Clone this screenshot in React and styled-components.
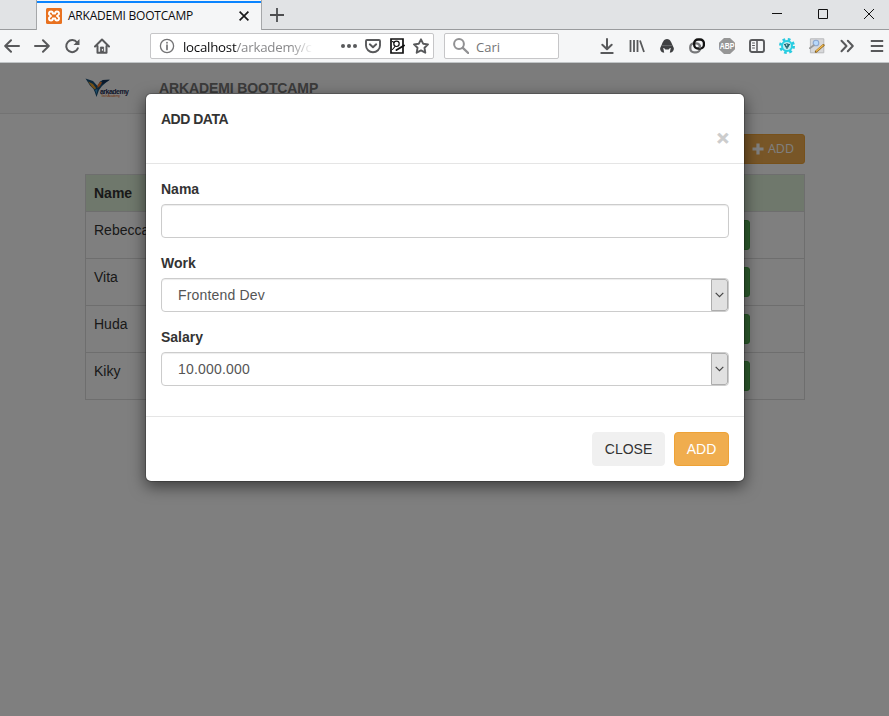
import React from 'react';
import styled, { createGlobalStyle } from 'styled-components';

const GlobalStyle = createGlobalStyle`
  *, *::before, *::after { box-sizing: border-box; }
  html, body { margin: 0; padding: 0; overflow: hidden; }
  body { font: 14px/20px "Liberation Sans", Arial, sans-serif; color: #333; background: #fff; }
  svg { display: block; flex: none; }
`;

const Window = styled.div`
  width: 889px;
  height: 716px;
  display: flex;
  flex-direction: column;
  overflow: hidden;
`;

/* Browser chrome */
const TabStrip = styled.div`
  display: flex;
  flex: none;
  height: 30px;
  padding-left: 36px;
  background: linear-gradient(#999b9d, #999b9d) bottom / 100% 1px no-repeat #e1e3e5;
  overflow: hidden;
`;
const Tab = styled.div`
  display: flex;
  align-items: center;
  width: 226px;
  height: 30px;
  padding: 2px 9px 0;
  background: linear-gradient(#0a84ff, #0a84ff) 0 1px / 100% 2px no-repeat #f5f6f7;
  border-left: 1px solid #a5a7a9;
  border-right: 1px solid #a5a7a9;
`;
const TabTitle = styled.span`
  flex: 1;
  margin-left: 6px;
  font: 12px/16px "Open Sans", "Noto Sans", sans-serif;
  letter-spacing: -0.22px;
  color: #0c0c0d;
  white-space: nowrap;
`;
const NewTab = styled.div`
  display: flex;
  align-items: center;
  padding-left: 8px;
`;
const WindowControls = styled.div`
  display: flex;
  margin: 0 -3px 0 auto;
`;
const ControlCell = styled.div`
  display: grid;
  place-items: center;
  width: 46px;
  height: 28px;
`;
const Toolbar = styled.div`
  display: flex;
  align-items: center;
  flex: none;
  height: 33px;
  background: #f5f6f7;
  border-bottom: 1px solid #c1c5c7;
  overflow: hidden;
`;
const IconRow = styled.div`
  display: flex;
  flex: none;
  margin-left: ${(p) => p.$offset}px;
`;
const IconCell = styled.span`
  display: grid;
  place-items: center;
  flex: none;
  width: ${(p) => p.$width || 30}px;
  height: 26px;
`;
const Field = styled.div`
  display: flex;
  align-items: center;
  flex: none;
  width: ${(p) => p.$width}px;
  height: 26px;
  margin-left: ${(p) => p.$gap}px;
  padding-left: 8px;
  background: #fff;
  border: 1px solid #c6c6c8;
  border-radius: 2px;
  font: 13.3px/18px "Open Sans", "Noto Sans", sans-serif;
  color: #747476;
`;
const Address = styled.span`
  width: 130px;
  margin: 2px 0 0 8px;
  white-space: nowrap;
  letter-spacing: -0.25px;
  color: #8a8a8c;
  mask-image: linear-gradient(90deg, #000 108px, transparent 130px);
  b { font-weight: 400; color: #0c0c0d; }
`;
const UrlActions = styled.div`
  display: flex;
  margin: 0 0 0 auto;
`;
const SearchHint = styled.span`
  margin: 2px 0 0 7px;
  font-size: 13px;
`;

/* Page */
const Page = styled.main`
  position: relative;
  flex: 1;
  background: #fff;
`;
const Navbar = styled.nav`
  display: flex;
  height: 51px;
  padding-left: 85px;
  background: #f8f8f8;
  border-bottom: 1px solid #e7e7e7;
`;
const Brand = styled.span`
  margin: 15px 0 0 29px;
  font-weight: 700;
  letter-spacing: -0.11px;
  color: #777;
`;
const LogoBox = styled.div`
  width: 45px;
  padding-top: 14px;
`;
const Container = styled.div`
  width: 720px;
  margin-left: 85px;
  padding-top: 20px;
`;
const Actions = styled.div`
  display: flex;
  justify-content: flex-end;
  margin-bottom: 10px;
`;
const SmallButton = styled.button`
  display: flex;
  align-items: center;
  gap: 4px;
  height: 30px;
  padding: 0 10px;
  font: 400 12.5px/18px "Open Sans", "Noto Sans", sans-serif;
  color: #fff;
  background: #f0ad4e;
  border: 1px solid #eea236;
  border-radius: 3px;
`;
const Table = styled.div`
  border: 1px solid #ddd;
  border-top: 0;
`;
const Row = styled.div`
  display: grid;
  grid-template-columns: 200px 200px 180px 1fr;
  height: ${(p) => (p.$head ? 37 : 47)}px;
  border-top: 1px solid #ddd;
  background: ${(p) => (p.$head ? '#dff0d8' : '#fff')};
  font-weight: ${(p) => (p.$head ? 700 : 400)};
`;
const Cell = styled.div`
  padding: 8px;
`;
const EditButton = styled.button`
  display: block;
  width: 76px;
  height: 30px;
  background: #5cb85c;
  border: 1px solid #4cae4c;
  border-radius: 3px;
`;

/* Dialog */
const Backdrop = styled.div`
  position: absolute;
  inset: 0;
  padding: 30px 0 0 145px;
  background: rgba(0, 0, 0, 0.5);
`;
const Dialog = styled.section`
  width: 600px;
  background: #fff;
  background-clip: padding-box;
  border: 1px solid rgba(0, 0, 0, 0.2);
  border-radius: 6px;
  box-shadow: 0 5px 15px rgba(0, 0, 0, 0.5);
`;
const DialogHeader = styled.header`
  height: 70px;
  padding: 15px;
  border-bottom: 1px solid #e5e5e5;
`;
const DialogTitle = styled.h5`
  margin: 0;
  font-size: 14px;
  line-height: 20px;
  letter-spacing: -0.5px;
`;
const CloseIcon = styled.button`
  display: block;
  margin: 0 0 0 auto;
  padding: 0;
  border: 0;
  background: none;
  font: 700 21px/18px "Liberation Sans", Arial, sans-serif;
  color: #ccc;
  -webkit-text-stroke: 0.6px #ccc;
`;
const DialogBody = styled.div`
  padding: 15px;
`;
const FormGroup = styled.div`
  margin-bottom: 15px;
`;
const Label = styled.label`
  display: block;
  margin-bottom: 5px;
  font-weight: 700;
`;
const Control = styled.div`
  display: flex;
  justify-content: space-between;
  height: 34px;
  padding-left: 16px;
  line-height: 32px;
  letter-spacing: 0.18px;
  color: #555;
  background: #fff;
  border: 1px solid #ccc;
  border-radius: 4px;
  box-shadow: inset 0 1px 1px rgba(0, 0, 0, 0.075);
  overflow: hidden;
`;
const SelectArrow = styled.span`
  display: grid;
  place-items: center;
  width: 17px;
  padding-right: 1px;
  background: #e1e1e1;
  border: 1px solid #adadad;
  border-radius: 0 3px 3px 0;
`;
const DialogFooter = styled.footer`
  display: flex;
  justify-content: flex-end;
  gap: 9px;
  padding: 15px;
  border-top: 1px solid #e5e5e5;
`;
const Button = styled.button`
  width: ${(p) => (p.$primary ? 55 : 73)}px;
  height: 34px;
  padding: 0;
  font: 14px/20px "Liberation Sans", Arial, sans-serif;
  color: ${(p) => (p.$primary ? '#fff' : '#333')};
  background: ${(p) => (p.$primary ? '#f0ad4e' : '#f0f0f0')};
  border: 1px solid ${(p) => (p.$primary ? '#eea236' : '#f0f0f0')};
  border-radius: 4px;
`;

const Glyph = ({ size = 16, w = 2, color = '#58595b', children }) => (
  <svg width={size} height={size} viewBox="0 0 16 16" fill="none" stroke={color} strokeWidth={w} strokeLinecap="round" strokeLinejoin="round">
    {children}
  </svg>
);

const Favicon = () => (
  <svg width="16" height="16" viewBox="0 0 16 16">
    <rect width="16" height="16" rx="1.5" fill="#e8711f" />
    <path d="M5 3.500c-2.400 0-2.700 2.800-1 3.600l1 .9-1 .9c-1.700.8-1.400 3.600 1 3.600 1.400 0 1.800-.8 1.800-2h2.400c0 1.200.4 2 1.800 2 2.400 0 2.700-2.800 1-3.600L11 8l1-.9c1.700-.8 1.400-3.600-1-3.600-1.400 0-1.800.8-1.800 2H6.800c0-1.200-.4-2-1.800-2Z" fill="none" stroke="#fff" strokeWidth="1.900" strokeLinejoin="round" />
  </svg>
);

const BackIcon = () => <Glyph><path d="M15 8H1.500M7 2.300 1.200 8 7 13.700" /></Glyph>;
const ForwardIcon = () => <Glyph><path d="M1 8h13.500M9 2.300 14.800 8 9 13.700" /></Glyph>;
const ReloadIcon = () => (
  <Glyph>
    <path d="M13.800 10.300A6 6 0 1 1 13 4.500" />
    <path d="M15.500 1v6H9.500Z" fill="#58595b" stroke="none" />
  </Glyph>
);
const HomeIcon = () => (
  <Glyph>
    <path d="M1 8.500 8 1.500l7 7M3.500 8v6.700h9V8" />
    <path d="M6.400 14.500V9h3.200v5.500" fill="#58595b" strokeWidth=".8" />
    <path d="M8.400 11.300v1" stroke="#fff" strokeWidth="1" />
  </Glyph>
);
const InfoIcon = () => (
  <Glyph w={1.300} color="#737375">
    <circle cx="8" cy="8" r="6.600" />
    <path d="M8 7.200v4.200M8 4.600v.2" strokeWidth="1.700" />
  </Glyph>
);
const DotsIcon = () => (
  <Glyph><g fill="#58595b" stroke="none"><circle cx="2" cy="8" r="2" /><circle cx="8" cy="8" r="2" /><circle cx="14" cy="8" r="2" /></g></Glyph>
);
const PocketIcon = () => <Glyph w={1.900}><path d="M2 2h12q1 0 1 1v4.500a7 6.700 0 0 1-14 0V3q0-1 1-1ZM4.800 6.300 8 9.300l3.200-3" /></Glyph>;
const NoteIcon = () => (
  <Glyph color="#111" w={1.700}>
    <path d="M2 1h12v14H2Z" strokeLinejoin="miter" />
    <circle cx="7.500" cy="5.800" r="2.700" strokeWidth="1.200" />
    <path d="m3.500 11.500 2.500-3M3.500 3.500l1.500 1" strokeWidth="1.100" />
    <path d="m7.500 12 7.500-4.500" strokeWidth="1.900" />
  </Glyph>
);
const StarIcon = () => <Glyph w={1.900}><path d="m8 1.300 2.100 4.400 4.900.7-3.500 3.400.8 4.900L8 12.400l-4.300 2.300.8-4.900L1 6.400l4.900-.7Z" /></Glyph>;
const SearchIcon = () => <Glyph color="#919193"><circle cx="6" cy="6" r="4.900" /><path d="m9.800 9.800 5.400 5.200" strokeWidth="2.300" /></Glyph>;

const DownloadIcon = () => <Glyph><path d="M8 1v10M3.300 6.800 8 11.300l4.700-4.500M2.300 15h11.400" /></Glyph>;
const LibraryIcon = () => <Glyph><path d="M1.500 2v12M5 2v12M8.500 2v12M11 2.500 15 14" strokeWidth="1.800" strokeLinecap="butt" /></Glyph>;
const HatIcon = () => (
  <Glyph>
    <path d="M8 1C5 1 3.800 4 2.800 6.500L1.200 10c-.4 2 1 4.500 4 4.700L4.300 10h7.400l-.9 4.700c3-.2 4.400-2.700 4-4.700l-1.600-3.500C12.200 4 11 1 8 1Z" fill="#3f4042" stroke="none" />
    <path d="M3.500 7.600h9" stroke="#707173" strokeWidth=".8" />
    <path d="m5 10 1.400 1.400h3.200L11 10" fill="#3f4042" stroke="none" />
  </Glyph>
);
const LinkIcon = () => (
  <Glyph w={2.300}>
    <rect x="1.300" y="5.300" width="9.700" height="9" rx="3.800" stroke="#77787a" />
    <rect x="5.200" y="1.500" width="9.700" height="9" rx="3.800" stroke="#111" />
    <path d="M10.900 7.300v3.100" stroke="#77787a" strokeLinecap="butt" />
  </Glyph>
);
const AbpIcon = () => (
  <svg width="16" height="16" viewBox="0 0 16 16">
    <path d="M5 0h6l5 4.700v6.600L11 16H5l-5-4.700V4.700Z" fill="#969696" />
    <text x=".7" y="11" textLength="14.600" lengthAdjust="spacingAndGlyphs" fontFamily="Liberation Sans, sans-serif" fontWeight="700" fontSize="8.300" fill="#fff">ABP</text>
  </svg>
);
const SidebarIcon = () => (
  <Glyph w={1.900}>
    <rect x="1" y="2" width="14" height="12" rx="2" />
    <path d="M8 2v12" strokeWidth="1.500" />
    <path d="M3.500 5h2M3.500 7.500h2M3.500 10h2" strokeWidth="1" />
  </Glyph>
);
const GearIcon = () => (
  <Glyph>
    <circle cx="8" cy="8" r="6.500" stroke="#29c9df" strokeWidth="3" strokeDasharray="2.600 2.505" strokeLinecap="butt" />
    <circle cx="8" cy="8" r="5" stroke="#29d0e3" strokeWidth="2" fill="#c6eef2" />
    <circle cx="8" cy="7.500" r="2.200" fill="#27717c" stroke="none" />
    <path d="m5.500 6.500 1 .5M10.500 6.500l-1 .5M8 9v1.500" stroke="#27616b" strokeWidth="1.200" />
    <circle cx="7.600" cy="7" r=".7" fill="#dff" stroke="none" />
  </Glyph>
);
const InspectIcon = () => (
  <Glyph>
    <rect x="1.800" y=".8" width="13" height="14" fill="#d7d8da" stroke="#b8b9bb" strokeWidth="1" />
    <circle cx="7" cy="5" r="2.800" fill="#b7d8fa" stroke="#8ba7d1" strokeWidth="1.100" />
    <path d="m4.800 7.200-4 3" stroke="#999" strokeWidth="1.700" />
    <path d="m7 13.700 7.500-6.500" stroke="#86601c" strokeWidth="2.300" />
    <path d="m7.500 13 6.500-5.700" stroke="#f4ba4d" strokeWidth="1.300" />
  </Glyph>
);
const MoreIcon = () => <Glyph><path d="m2.500 2.800 5 5.200-5 5.200M8.800 2.800l5 5.200-5 5.200" /></Glyph>;
const MenuIcon = () => <Glyph><path d="M2.800 3h10.400M2.800 8h10.400M2.800 13h10.400" strokeLinecap="square" /></Glyph>;

const Logo = () => (
  <svg width="45" height="22" viewBox="0 0 45 22">
    <path d="M.5 1.500 8 4l4.500 5 2.500-4.500 3-1.500 7-.2-4 2.700-4 3.500-3 4-2.500 7-1.700-5L8.500 12 5 8.500Z" fill="#195078" />
    <path d="m3 4.500 5 2.500 3 4-1 1.500-3-2.500Z" fill="#e6a02d" />
    <path d="m12.500 8 3-3.500 1.500 1-2 3.500-2.500 2Z" fill="#ef7729" />
    <path d="m17.500 3 7-.2-4 2.700-3.500 2Z" fill="#123056" />
    <path d="m10 13 2.500-1-.8 5Z" fill="#3d9bd0" />
    <text x="15" y="17" textLength="29" fontFamily="Liberation Sans, sans-serif" fontWeight="700" fontSize="7" fill="#1c2c55">arkademy</text>
    <text x="16" y="20.300" textLength="19" fontFamily="Liberation Sans, sans-serif" fontSize="3.500" fill="#e06b28">Tech Academy</text>
  </svg>
);

const people = ['Rebecca', 'Vita', 'Huda', 'Kiky'];
const navIcons = [BackIcon, ForwardIcon, ReloadIcon, HomeIcon];
const urlIcons = [DotsIcon, PocketIcon, NoteIcon, StarIcon];
const toolIcons = [DownloadIcon, LibraryIcon, HatIcon, LinkIcon, AbpIcon, SidebarIcon, GearIcon, InspectIcon, MoreIcon, MenuIcon];

const FormField = ({ label, value }) => (
  <FormGroup>
    <Label>{label}</Label>
    <Control>
      {value && <span>{value}</span>}
      {value && (
        <SelectArrow>
          <svg width="9" height="6" viewBox="0 0 9 6" fill="none" stroke="#444" strokeWidth="1.200"><path d="m.7.8 3.800 3.800L8.300.8" /></svg>
        </SelectArrow>
      )}
    </Control>
  </FormGroup>
);

export default function App() {
  return (
    <Window>
      <GlobalStyle />
      <TabStrip>
        <Tab>
          <Favicon />
          <TabTitle>ARKADEMI BOOTCAMP</TabTitle>
          <IconCell $width={16}>
            <svg width="10" height="10" viewBox="0 0 10 10" stroke="#1a1a1b" strokeWidth="1.700"><path d="m.6.6 8.800 8.800M9.400.6.6 9.400" /></svg>
          </IconCell>
        </Tab>
        <NewTab>
          <svg width="14" height="14" viewBox="0 0 14 14" stroke="#4c4d4f" strokeWidth="1.800"><path d="M7 0v14M0 7h14" /></svg>
        </NewTab>
        <WindowControls>
          <ControlCell><svg width="10" height="11" stroke="#111"><path d="M0 4.500h10" /></svg></ControlCell>
          <ControlCell><svg width="10" height="10" fill="none" stroke="#111"><path d="M.5.5h9v9h-9Z" /></svg></ControlCell>
          <ControlCell><svg width="10" height="10" stroke="#111"><path d="m0 0 10 10M10 0 0 10" /></svg></ControlCell>
        </WindowControls>
      </TabStrip>

      <Toolbar>
        <IconRow $offset={-3}>{navIcons.map((Icon, i) => <IconCell key={i}><Icon /></IconCell>)}</IconRow>
        <Field $width={284} $gap={33}>
          <InfoIcon />
          <Address><b>localhost</b>/arkademy/c</Address>
          <UrlActions>{urlIcons.map((Icon, i) => <IconCell key={i} $width={24}><Icon /></IconCell>)}</UrlActions>
        </Field>
        <Field $width={115} $gap={10}>
          <SearchIcon />
          <SearchHint>Cari</SearchHint>
        </Field>
        <IconRow $offset={33}>{toolIcons.map((Icon, i) => <IconCell key={i}><Icon /></IconCell>)}</IconRow>
      </Toolbar>

      <Page>
        <Navbar>
          <LogoBox><Logo /></LogoBox>
          <Brand>ARKADEMI BOOTCAMP</Brand>
        </Navbar>
        <Container>
          <Actions>
            <SmallButton>
              <svg width="12" height="12" stroke="#fff" strokeWidth="3.200"><path d="M6 .5v11M.5 6h11" /></svg>
              ADD
            </SmallButton>
          </Actions>
          <Table>
            <Row $head><Cell>Name</Cell></Row>
            {people.map((name) => (
              <Row key={name}>
                <Cell>{name}</Cell>
                <Cell />
                <Cell />
                <Cell><EditButton /></Cell>
              </Row>
            ))}
          </Table>
        </Container>

        <Backdrop>
          <Dialog>
            <DialogHeader>
              <DialogTitle>ADD DATA</DialogTitle>
              <CloseIcon>×</CloseIcon>
            </DialogHeader>
            <DialogBody>
              <FormField label="Nama" />
              <FormField label="Work" value="Frontend Dev" />
              <FormField label="Salary" value="10.000.000" />
            </DialogBody>
            <DialogFooter>
              <Button>CLOSE</Button>
              <Button $primary>ADD</Button>
            </DialogFooter>
          </Dialog>
        </Backdrop>
      </Page>
    </Window>
  );
}
